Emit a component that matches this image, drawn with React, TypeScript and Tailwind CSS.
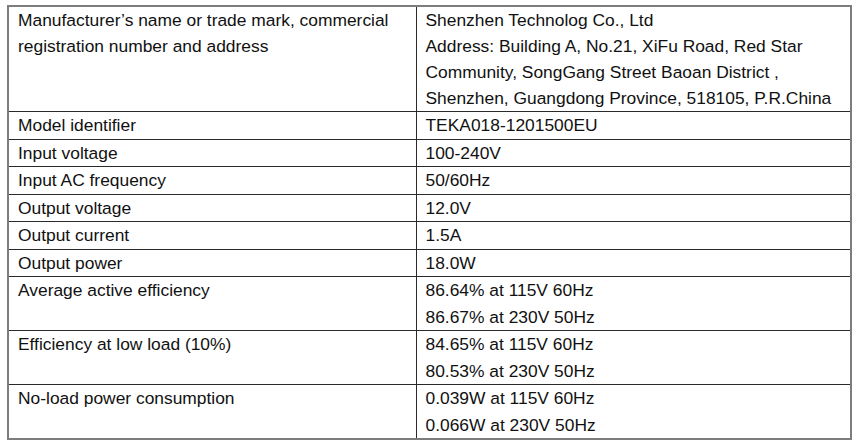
import React from "react";

const rows: { label: string[]; value: string[] }[] = [
  {
    label: ["Manufacturer\u2019s name or trade mark, commercial", "registration number and address"],
    value: [
      "Shenzhen Technolog Co., Ltd",
      "Address: Building A, No.21, XiFu Road, Red Star",
      "Community, SongGang Street Baoan District ,",
      "Shenzhen, Guangdong Province, 518105, P.R.China",
    ],
  },
  { label: ["Model identifier"], value: ["TEKA018-1201500EU"] },
  { label: ["Input voltage"], value: ["100-240V"] },
  { label: ["Input AC frequency"], value: ["50/60Hz"] },
  { label: ["Output voltage"], value: ["12.0V"] },
  { label: ["Output current"], value: ["1.5A"] },
  { label: ["Output power"], value: ["18.0W"] },
  { label: ["Average active efficiency"], value: ["86.64% at 115V 60Hz", "86.67% at 230V 50Hz"] },
  { label: ["Efficiency at low load (10%)"], value: ["84.65% at 115V 60Hz", "80.53% at 230V 50Hz"] },
  { label: ["No-load power consumption"], value: ["0.039W at 115V 60Hz", "0.066W at 230V 50Hz"] },
];

const App = () => {
  return (
    <main className="min-h-screen bg-white pl-[7px] pt-[5px] font-['Liberation_Sans',Arial,sans-serif] text-[17.4px] leading-[26.5px] text-[#111]">
      <table className="w-[845px] table-fixed border-collapse border-2 border-[#7d7d7d]">
        <colgroup>
          <col className="w-[408px]" />
          <col />
        </colgroup>
        <tbody>
          {rows.map((row, i) => (
            <tr key={i} className={i === 0 ? "leading-[26px]" : ""}>
              <td className="border border-[#2a2a2a] pl-[9px] align-top">
                {row.label.map((t) => (
                  <div key={t} className="whitespace-nowrap">{t}</div>
                ))}
              </td>
              <td className="border border-[#2a2a2a] pl-[9px] align-top">
                {row.value.map((t) => (
                  <div key={t} className="whitespace-nowrap">{t}</div>
                ))}
              </td>
            </tr>
          ))}
        </tbody>
      </table>
    </main>
  );
};

export default App;
